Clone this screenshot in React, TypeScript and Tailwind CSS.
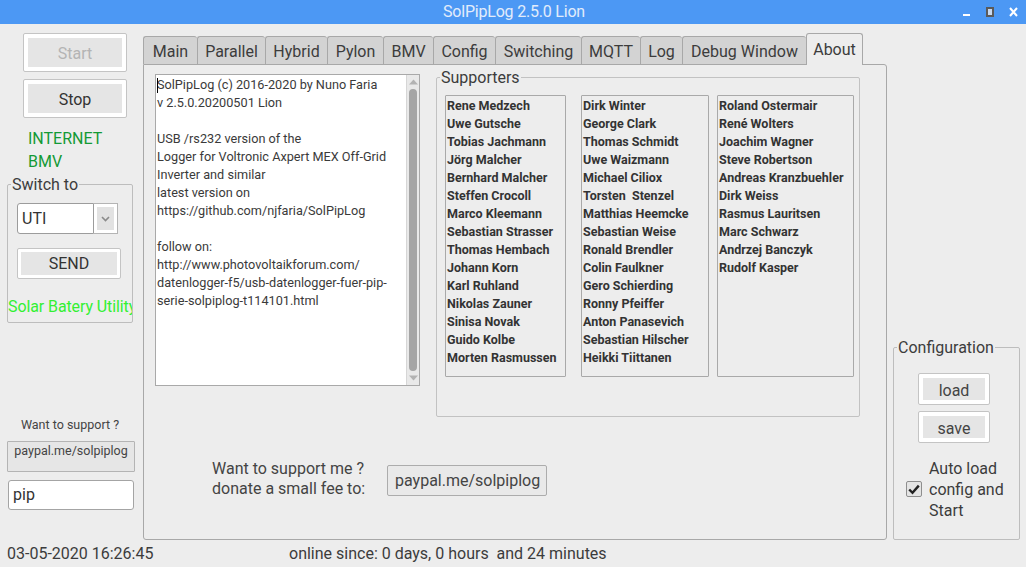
import React from "react";

function GBtn({
  className,
  inner,
  children,
}: {
  className: string;
  inner: string;
  children: React.ReactNode;
}) {
  return (
    <div className={`${className} border border-[#c4c4c4] bg-white rounded-[2px] box-border`}>
      <div className={`w-full h-full bg-[#e5e5e5] flex items-center justify-center ${inner}`}>{children}</div>
    </div>
  );
}

const tabs: { label: string; w: string }[] = [
  { label: "Main", w: "w-[54px]" },
  { label: "Parallel", w: "w-[68px]" },
  { label: "Hybrid", w: "w-[62px]" },
  { label: "Pylon", w: "w-[56px]" },
  { label: "BMV", w: "w-[50px]" },
  { label: "Config", w: "w-[62px]" },
  { label: "Switching", w: "w-[86px]" },
  { label: "MQTT", w: "w-[59px]" },
  { label: "Log", w: "w-[42px]" },
  { label: "Debug Window", w: "w-[124px]" },
];

const col1 = [
  "Rene Medzech",
  "Uwe Gutsche",
  "Tobias Jachmann",
  "Jörg Malcher",
  "Bernhard Malcher",
  "Steffen Crocoll",
  "Marco Kleemann",
  "Sebastian Strasser",
  "Thomas Hembach",
  "Johann Korn",
  "Karl Ruhland",
  "Nikolas Zauner",
  "Sinisa Novak",
  "Guido Kolbe",
  "Morten Rasmussen",
];
const col2 = [
  "Dirk Winter",
  "George Clark",
  "Thomas Schmidt",
  "Uwe Waizmann",
  "Michael Ciliox",
  "Torsten  Stenzel",
  "Matthias Heemcke",
  "Sebastian Weise",
  "Ronald Brendler",
  "Colin Faulkner",
  "Gero Schierding",
  "Ronny Pfeiffer",
  "Anton Panasevich",
  "Sebastian Hilscher",
  "Heikki Tiittanen",
];
const col3 = [
  "Roland Ostermair",
  "René Wolters",
  "Joachim Wagner",
  "Steve Robertson",
  "Andreas Kranzbuehler",
  "Dirk Weiss",
  "Rasmus Lauritsen",
  "Marc Schwarz",
  "Andrzej Banczyk",
  "Rudolf Kasper",
];

const aboutLines = [
  "SolPipLog (c) 2016-2020 by Nuno Faria",
  "v 2.5.0.20200501 Lion",
  "",
  "USB /rs232 version of the",
  "Logger for Voltronic Axpert MEX Off-Grid",
  "Inverter and similar",
  "latest version on",
  "https://github.com/njfaria/SolPipLog",
  "",
  "follow on:",
  "http://www.photovoltaikforum.com/",
  "datenlogger-f5/usb-datenlogger-fuer-pip-",
  "serie-solpiplog-t114101.html",
];

function NameCol({ names, w }: { names: string[]; w: string }) {
  return (
    <div className={`${w} h-[282px] border border-[#a9a9a9] rounded-[1px] pl-[1px] pt-[1px] box-border`}>
      {names.map((n, i) => (
        <div key={i} className="h-[18px] leading-[18px] text-[12.5px] font-bold text-[#333] whitespace-pre">
          {n}
        </div>
      ))}
    </div>
  );
}

export default function App() {
  return (
    <div className="w-[1026px] h-[567px] bg-[#ededed] overflow-hidden font-['Roboto',sans-serif] text-[#3c3c3c] flex flex-col">
      {/* Title bar */}
      <div className="h-[24px] bg-[#4c98f4] flex items-center relative shrink-0">
        <div className="flex-1 text-center text-[16px] leading-[24px] text-[#e2ecfb] pl-[2px] tracking-[-0.2px]">
          SolPipLog 2.5.0 Lion
        </div>
        <div className="absolute right-0 top-0 h-[24px] flex items-center">
          <div className="w-[24px] h-[24px] flex items-end justify-center pb-[8px]">
            <div className="w-[7px] h-[2px] bg-white" />
          </div>
          <div className="w-[24px] h-[24px] flex items-center justify-center">
            <div className="w-[8px] h-[10px] border-[2px] border-[#5a5a5a] bg-[#c9d9ef]" />
          </div>
          <div className="w-[24px] h-[24px] flex items-center justify-center pr-[2px]">
            <svg width="9" height="10" viewBox="0 0 9 10">
              <path d="M1 1 L8 9 M8 1 L1 9" stroke="white" strokeWidth="2" />
            </svg>
          </div>
        </div>
      </div>

      {/* Main row */}
      <div className="h-[516px] flex shrink-0">
        {/* Left column */}
        <div className="w-[143px] shrink-0 flex flex-col">
          <GBtn className="ml-[23px] mt-[9px] w-[104px] h-[39px] p-[4px]" inner="text-[16px] text-[#b4b4b4] pt-[2px]">
            Start
          </GBtn>
          <GBtn className="ml-[23px] mt-[7px] w-[104px] h-[39px] p-[4px]" inner="text-[16px] text-[#333] pt-[2px]">
            Stop
          </GBtn>
          <div className="ml-[28px] mt-[9px] text-[16px] leading-[23px] text-[#139a35]">INTERNET</div>
          <div className="ml-[28px] text-[16px] leading-[23px] text-[#139a35]">BMV</div>
          <fieldset className="ml-[7px] mt-[2px] w-[126px] h-[148px] border border-[#bdbdbd] rounded-[2px] box-border min-w-0">
            <legend className="ml-[3px] px-[1px] text-[16px] leading-[19px] text-[#3c3c3c]">Switch to</legend>
            <div className="ml-[9px] mt-[9px] flex h-[31px]">
              <div className="w-[77px] h-[31px] bg-white border border-[#9c9c9c] rounded-l-[3px] flex items-center pl-[4px] pt-[1px] text-[16px] text-[#333]">
                UTI
              </div>
              <div className="w-[24px] h-[31px] bg-white border border-l-0 border-[#b4b4b4] flex items-center justify-center">
                <div className="w-[17px] h-[23px] bg-[#e2e2e2] flex items-center justify-center">
                  <svg width="9" height="6" viewBox="0 0 9 6">
                    <path d="M1 1 L4.5 4.5 L8 1" stroke="#8a8a8a" strokeWidth="1.6" fill="none" />
                  </svg>
                </div>
              </div>
            </div>
            <GBtn className="ml-[9px] mt-[14px] w-[104px] h-[31px] p-[3px]" inner="text-[16px] text-[#333] pt-[1px]">
              SEND
            </GBtn>
            <div className="mt-[18px] text-[16px] leading-[20px] text-[#33f033] whitespace-nowrap overflow-hidden tracking-[-0.1px]">
              Solar Batery Utility
            </div>
          </fieldset>
          <div className="mt-[94px] text-center w-[140px] text-[12.5px] leading-[16px] text-[#444]">Want to support ?</div>
          <div className="ml-[7px] mt-[8px] w-[128px] h-[31px] border border-[#b4b4b4] bg-[#e6e6e6] rounded-[1px] text-center text-[12.5px] leading-[18px] text-[#444]">
            paypal.me/solpiplog
          </div>
          <div className="ml-[8px] mt-[8px] w-[126px] h-[30px] bg-white border border-[#a4a4a4] rounded-[3px] flex items-center pl-[4px] text-[16px] text-[#333]">
            pip
          </div>
        </div>

        {/* Middle: tabs */}
        <div className="w-[744px] shrink-0 flex flex-col pt-[9px]">
          <div className="h-[31px] flex items-end relative z-10">
            {tabs.map((t) => (
              <div
                key={t.label}
                className={`${t.w} h-[28px] bg-[#d3d3d3] border border-[#a8a8a8] border-r-0 border-b-0 rounded-t-[3px] flex items-center justify-center pt-[3px] text-[16px] text-[#3c3c3c] box-border`}
              >
                {t.label}
              </div>
            ))}
            <div className="w-[57px] h-[32px] -mb-[1px] bg-[#ededed] border border-[#a8a8a8] border-b-0 rounded-t-[3px] flex items-center justify-center text-[16px] text-[#3c3c3c] box-border pt-[1px]">
              About
            </div>
          </div>
          <div className="h-[476px] border border-[#a8a8a8] rounded-b-[3px] rounded-tr-[3px] box-border flex flex-col">
            <div className="flex items-start">
              {/* text area */}
              <div className="ml-[11px] mt-[9px] w-[265px] h-[312px] bg-white border border-[#a9a9a9] box-border flex">
                <div className="flex-1 pl-[1px] pt-[1px] text-[12.7px] leading-[18px] text-[#3a3a3a] relative whitespace-nowrap overflow-hidden">
                  <div className="absolute left-[1px] top-[3px] w-[1px] h-[15px] bg-black" />
                  {aboutLines.map((l, i) => (
                    <div key={i} className="h-[18px]">
                      {l}
                    </div>
                  ))}
                </div>
                <div className="w-[13px] bg-[#e9e9e9] border-l border-[#d6d6d6] flex flex-col items-center">
                  <svg width="9" height="6" viewBox="0 0 9 6" className="mt-[4px]">
                    <path d="M0 5.5 L4.5 0.5 L9 5.5 Z" fill="#b3b3b3" />
                  </svg>
                  <div className="flex-1 w-[8px] my-[4px] rounded-full bg-[#a5a5a5]" />
                  <svg width="9" height="6" viewBox="0 0 9 6" className="mb-[4px]">
                    <path d="M0 0.5 L4.5 5.5 L9 0.5 Z" fill="#b3b3b3" />
                  </svg>
                </div>
              </div>
              {/* supporters */}
              <fieldset className="ml-[16px] mt-[3px] w-[424px] h-[349px] border border-[#c2c2c2] rounded-[2px] box-border min-w-0">
                <legend className="ml-[3px] px-[1px] text-[16px] leading-[19px] text-[#3c3c3c]">Supporters</legend>
                <div className="ml-[8px] mt-[8px] flex">
                  <NameCol names={col1} w="w-[121px]" />
                  <div className="w-[15px]" />
                  <NameCol names={col2} w="w-[128px]" />
                  <div className="w-[8px]" />
                  <NameCol names={col3} w="w-[137px]" />
                </div>
              </fieldset>
            </div>
            <div className="ml-[68px] mt-[42px] h-[40px] flex items-center">
              <div className="w-[175px] text-[16px] leading-[20px] text-[#444]">
                <div>Want to support me ?</div>
                <div>donate a small fee to:</div>
              </div>
              <div className="w-[160px] h-[31px] border border-[#acacac] bg-[#e9e9e9] rounded-[2px] flex items-center pl-[7px] text-[16px] text-[#444] mt-[3px]">
                paypal.me/solpiplog
              </div>
            </div>
          </div>
        </div>

        {/* Right column */}
        <div className="flex-1 flex flex-col justify-end pl-[6px]">
          <fieldset className="w-[127px] h-[202px] border border-[#bdbdbd] rounded-[2px] box-border min-w-0">
            <legend className="ml-[3px] px-[1px] text-[16px] leading-[19px] text-[#3c3c3c]">Configuration</legend>
            <GBtn className="ml-[24px] mt-[16px] w-[72px] h-[32px] p-[4px]" inner="text-[16px] text-[#444] pt-[3px]">
              load
            </GBtn>
            <GBtn className="ml-[24px] mt-[6px] w-[72px] h-[32px] p-[4px]" inner="text-[16px] text-[#444] pt-[3px]">
              save
            </GBtn>
            <div className="ml-[12px] mt-[14px] flex items-center gap-[7px]">
              <div className="w-[16px] h-[16px] shrink-0 border border-[#8e8e8e] rounded-[2px] bg-[#e4e4e4] flex items-center justify-center">
                <svg width="12" height="11" viewBox="0 0 12 11">
                  <path d="M1.2 5.5 L4.5 8.8 L10.8 1.6" stroke="#222" strokeWidth="2.4" fill="none" />
                </svg>
              </div>
              <div className="text-[16px] leading-[21px] text-[#3c3c3c] pt-[1px]">
                <div>Auto load</div>
                <div>config and</div>
                <div>Start</div>
              </div>
            </div>
          </fieldset>
        </div>
      </div>

      {/* Status bar */}
      <div className="h-[27px] flex items-center text-[16px] text-[#3c3c3c]">
        <div className="w-[289px] pl-[7px]">03-05-2020 16:26:45</div>
        <div className="whitespace-pre">online since: 0 days, 0 hours  and 24 minutes</div>
      </div>
    </div>
  );
}
